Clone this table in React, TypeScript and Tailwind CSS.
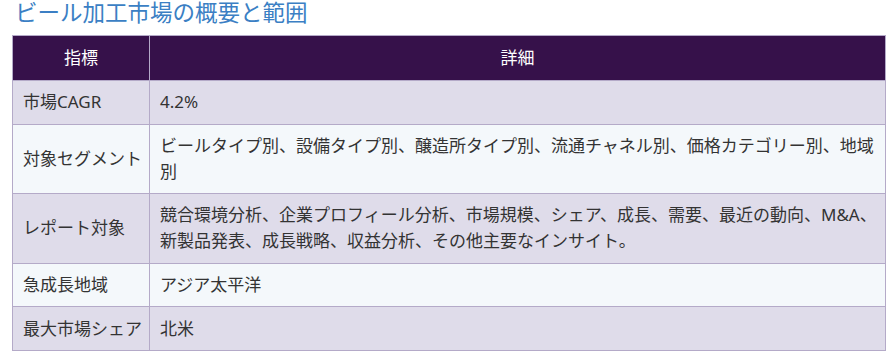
import React from 'react';

const rows: [string, string][] = [
  ['市場CAGR', '4.2%'],
  ['対象セグメント', 'ビールタイプ別、設備タイプ別、醸造所タイプ別、流通チャネル別、価格カテゴリー別、地域別'],
  ['レポート対象', '競合環境分析、企業プロフィール分析、市場規模、シェア、成長、需要、最近の動向、M&A、新製品発表、成長戦略、収益分析、その他主要なインサイト。'],
  ['急成長地域', 'アジア太平洋'],
  ['最大市場シェア', '北米'],
];

export default function App() {
  return (
    <div
      className="w-[895px] h-[361px] bg-white overflow-hidden"
      style={{ fontFamily: '"Noto Sans", "Noto Sans CJK JP", sans-serif' }}
    >
      <h2 className="pl-[15px] text-[22.5px] leading-[25px] text-[#3b7fc4] font-normal">
        ビール加工市場の概要と範囲
      </h2>
      <table className="ml-[12px] mt-[10px] w-[874px] border-collapse text-[17px] leading-[26px] text-[#333]">
        <thead>
          <tr className="bg-[#36114a] text-white">
            <th className="w-[137px] border border-[#b4aac8] py-[9px] font-normal text-center">指標</th>
            <th className="border border-[#b4aac8] py-[9px] font-normal text-center">詳細</th>
          </tr>
        </thead>
        <tbody>
          {rows.map(([k, v], i) => (
            <tr key={k} className={i % 2 === 0 ? 'bg-[#dfdcea]' : 'bg-[#f4f8fb]'}>
              <td className="border border-[#b4aac8] py-[8.3px] pl-[10px] pr-[4px] whitespace-nowrap align-middle">{k}</td>
              <td className="border border-[#b4aac8] py-[8.3px] pl-[10px] pr-[8px] align-middle">{v}</td>
            </tr>
          ))}
        </tbody>
      </table>
    </div>
  );
}
